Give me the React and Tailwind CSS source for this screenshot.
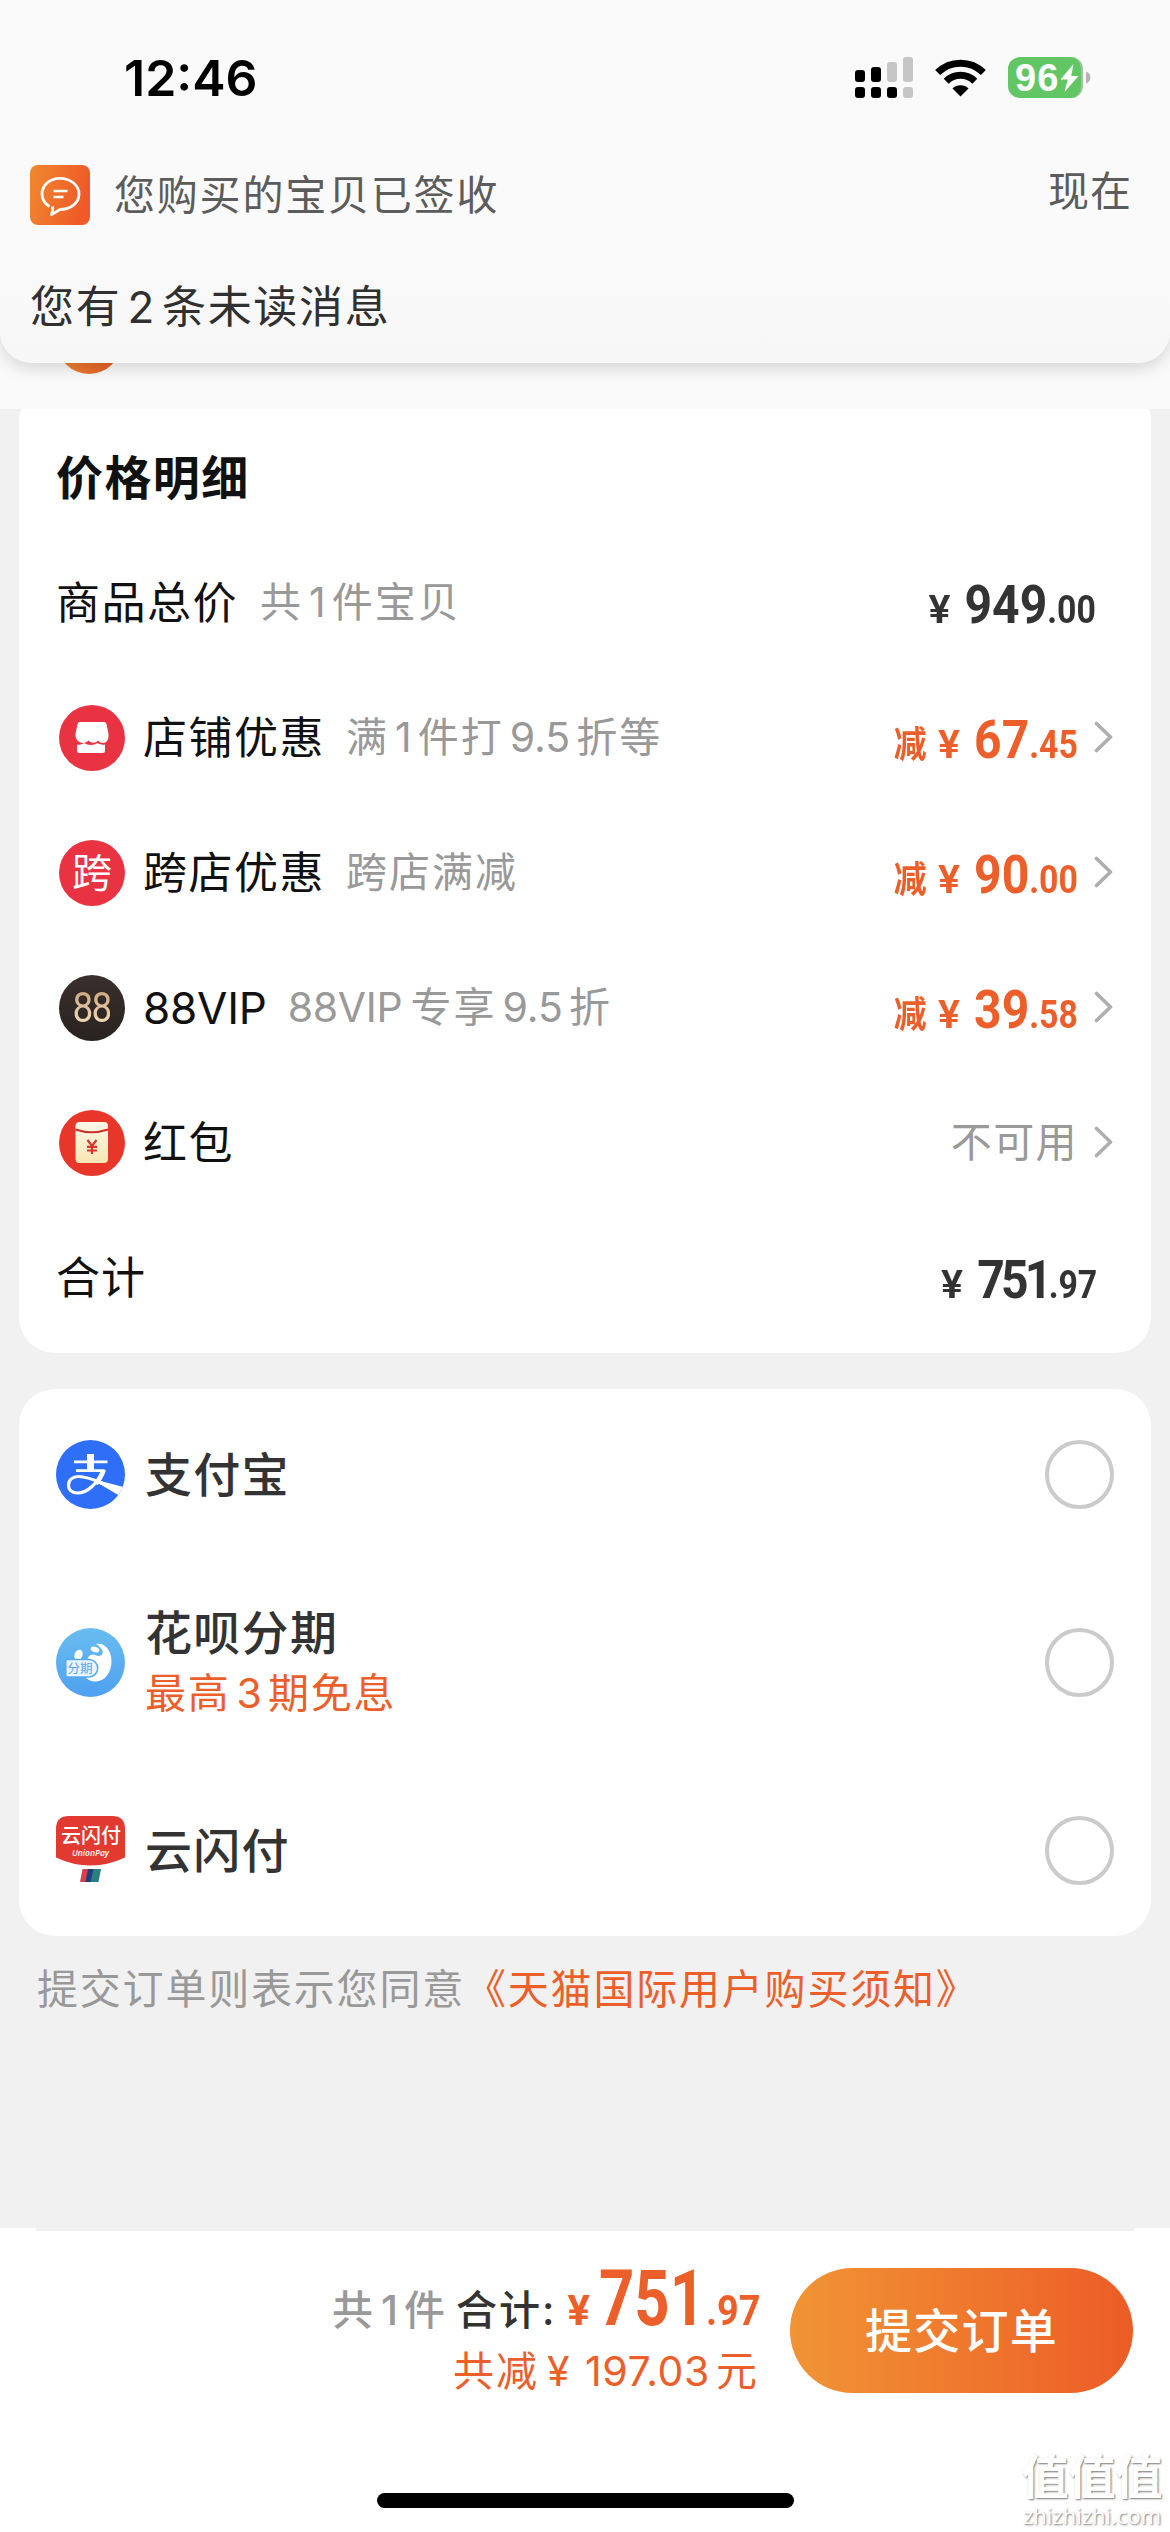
import React, { useState } from 'react';

const YEN = '\u00A5';

const priceRows = [
    { id: 'shop', label: '店铺优惠', note: ['满', '1', '件打', '9.5', '折等'], cut: ['67', '.45'] },
    { id: 'cross', label: '跨店优惠', note: ['跨店满减'], cut: ['90', '.00'] },
    { id: 'vip', label: '88VIP', note: ['88VIP', '专享', '9.5', '折'], cut: ['39', '.58'] },
    { id: 'packet', label: '红包', note: [], cut: null },
];

const payMethods = [
    { id: 'alipay', name: '支付宝' },
    { id: 'huabei', name: '花呗分期', promo: ['最高', '3', '期免息'] },
    { id: 'unionpay', name: '云闪付' },
];

// Latin runs get a little air on both sides, like the system font does
const Mixed = ({ parts }) =>
    parts.map((part, i) =>
        /^[\d.A-Z]+$/.test(part) ? (
            <span key={i} className={i === 0 ? 'mr-2 tracking-[-0.3px]' : 'mx-[6px] tracking-normal'}>
                {part}
            </span>
        ) : (
            <span key={i}>{part}</span>
        )
    );

const SignalIcon = () => (
    <svg width="58" height="41" viewBox="0 0 58 41">
        <g fill="#000">
            <rect x="0" y="13" width="10" height="12" rx="3" />
            <rect x="16" y="10" width="10" height="15" rx="3" />
            <rect x="0" y="30" width="10" height="11" rx="3" />
            <rect x="16" y="30" width="10" height="11" rx="3" />
            <rect x="32" y="30" width="10" height="11" rx="3" />
        </g>
        <g fill="#c6c6c6">
            <rect x="32" y="5" width="10" height="20" rx="3" />
            <rect x="48" y="0" width="10" height="25" rx="3" />
            <rect x="48" y="30" width="10" height="11" rx="3" />
        </g>
    </svg>
);

const WifiIcon = () => (
    <svg width="51" height="38" viewBox="0 0 51 38">
        <path d="M2.6 13.6a32.5 32.5 0 0 1 45.8 0" fill="none" stroke="#000" strokeWidth="7" />
        <path d="M11.2 22.2a20.3 20.3 0 0 1 28.6 0" fill="none" stroke="#000" strokeWidth="7" />
        <path d="M25.5 37.5l-8-8a11.3 11.3 0 0 1 16 0z" fill="#000" />
    </svg>
);

const Battery = () => (
    <div className="flex items-center gap-[3px]">
        <div className="flex h-[41px] w-[75px] items-center rounded-[12px] border-r-2 border-[#9cc99c] bg-[#62c664] pl-[7px]">
            <span className="w-[45px] text-[38px] leading-none font-bold tracking-[1px] text-white font-['Liberation_Sans',sans-serif]">
                96
            </span>
            <svg width="19" height="28" viewBox="0 0 19 28" className="shrink-0">
                <path d="M13.5 0L0.5 15.5h7.2L4.5 28 18.5 12h-7.3z" fill="#fff" />
            </svg>
        </div>
        <svg width="5" height="13" viewBox="0 0 5 13">
            <path d="M0 0.5a6.3 6.3 0 0 1 0 12z" fill="#b5b5b5" />
        </svg>
    </div>
);

const MessageIcon = () => (
    <svg width="60" height="60" viewBox="0 0 60 60">
        <defs>
            <linearGradient id="msg" x1="0" y1="0" x2="1" y2="0.25">
                <stop offset="0" stopColor="#f0892f" />
                <stop offset="1" stopColor="#ef5a28" />
            </linearGradient>
        </defs>
        <rect width="60" height="60" rx="8" fill="url(#msg)" />
        <path
            d="M19.5 41.5C14.5 38.5 12 34 12 29c0-9 8-15.700 18-15.700S49 20 49 29s-8.500 15.500-19 15.500c-1.500 1-5 3.500-8.500 5 1-2 1.500-5 1-8"
            fill="none"
            stroke="#fff"
            strokeWidth="2.800"
            strokeLinejoin="round"
        />
        <path d="M23.500 26h14M23.500 32h10" stroke="#fff" strokeWidth="2.500" />
    </svg>
);

const ShopIcon = () => (
    <svg width="66" height="66" viewBox="0 0 66 66" className="shrink-0">
        <circle cx="33" cy="33" r="33" fill="#ea3342" />
        <path
            d="M21 17h24q2 0 2.500 2l2 10c.5 6-2 9-5.500 9-2.500 0-4-1.500-5-2.500-2 3-7 3-9.500 0-1.500 1.500-3 2.500-5.500 2.500-4 0-8-3.500-7.500-9l2-10q.5-2 2.500-2z"
            fill="#fff"
        />
        <path d="M18 39.500c3 .6 5-.2 7-1.500 3.500 2.500 10.500 2.500 13.500 0 2 1.300 5 2.200 7.500 1.500V46q0 2-2 2H20q-2 0-2-2z" fill="#fff" />
    </svg>
);

const CrossIcon = () => (
    <div className="flex h-[66px] w-[66px] shrink-0 items-center justify-center rounded-full bg-[#ea3342] text-[40px] leading-none text-white">
        跨
    </div>
);

const VipIcon = () => (
    <div className="flex h-[66px] w-[66px] shrink-0 items-center justify-center rounded-full bg-linear-to-b from-[#3a2f2c] to-[#28231f]">
        <span className="scale-x-[.88] bg-linear-to-b from-[#c9a17a] to-[#f8e3c6] bg-clip-text text-[42px] leading-none tracking-[-2px] text-transparent font-['Roboto',sans-serif]">
            88
        </span>
    </div>
);

const PacketIcon = () => (
    <svg width="66" height="66" viewBox="0 0 66 66" className="shrink-0">
        <defs>
            <linearGradient id="packet" x1="0" y1="0" x2="0" y2="1">
                <stop offset="0" stopColor="#fdf8e8" />
                <stop offset="1" stopColor="#f8e7b4" />
            </linearGradient>
        </defs>
        <circle cx="33" cy="33" r="33" fill="#e8362b" />
        <rect x="16.500" y="12" width="32.500" height="41" rx="4" fill="url(#packet)" />
        <path d="M16.500 19.500q16 5.500 32.500 0" fill="none" stroke="#c8302c" strokeWidth="2" />
        <path d="M28.500 30l4.500 6 4.500-6M33 36v8M28 36.800h10M28 40.500h10" fill="none" stroke="#d8342c" strokeWidth="2.200" />
    </svg>
);

const AlipayIcon = () => (
    <svg width="69" height="69" viewBox="0 0 69 69" className="shrink-0">
        <defs>
            <clipPath id="alipayDisc">
                <circle cx="34.500" cy="34.500" r="34.500" />
            </clipPath>
        </defs>
        <circle cx="34.500" cy="34.500" r="34.500" fill="#2f6ef6" />
        <g clipPath="url(#alipayDisc)">
            <path d="M31 14h7v16h-7z" fill="#fff" />
            <path d="M18 20.500h33.500v2.800H18zM20 29.300h29l-1.500 2.800H20z" fill="#fff" />
            <path
                d="M46.500 30.500C42 42.500 32 53 21.500 53c-5.500 0-9-3.200-9-8 0-5 4-8.500 10-8.500 8.500 0 16 3.500 24 7"
                fill="none"
                stroke="#fff"
                strokeWidth="3.200"
            />
            <path d="M46 30l4 .5C48 36 45 41 42 45l-4-1.500C42 39 44.500 34.500 46 30z" fill="#fff" />
            <path d="M34 38.300L67.500 47l-4.500 8.500z" fill="#fff" />
        </g>
    </svg>
);

const HuabeiIcon = () => (
    <svg width="69" height="69" viewBox="0 0 69 69" className="shrink-0">
        <defs>
            <linearGradient id="huabei" x1="0" y1="0" x2="0" y2="1">
                <stop offset="0" stopColor="#69bdf0" />
                <stop offset="1" stopColor="#4fa0f0" />
            </linearGradient>
        </defs>
        <circle cx="34.500" cy="34.500" r="34.500" fill="url(#huabei)" />
        <path
            d="M40 16c9-2 15.500 7 15.500 17 0 12-7 20.500-16 20.500-5 0-8.500-2-11-5.500l3-17c1.500-5 6-5.500 9-3.500 5 2 8.500-3 4.500-7-1.500-2-3-3.500-5-4.500z"
            fill="#fff"
        />
        <ellipse cx="39" cy="21.500" rx="4.500" ry="2.700" transform="rotate(20 39 21.500)" fill="#fff" />
        <ellipse cx="22.500" cy="27" rx="4" ry="5.500" transform="rotate(20 22.500 27)" fill="#fff" />
        <path d="M11 31.500h22a8.700 8.700 0 0 1 0 17.400H11q-1.200 0-1.200-1.200v-15q0-1.200 1.200-1.200z" fill="#e9f5fe" stroke="#58aaf0" strokeWidth="1.500" />
        <text x="11.500" y="45" fontSize="12.500" fill="#58a6ee" fontFamily="Noto Sans CJK SC, sans-serif">
            分期
        </text>
    </svg>
);

const UnionPayIcon = () => (
    <svg width="69" height="69" viewBox="0 0 69 69" className="shrink-0">
        <path d="M13 0h43q13 0 13 13v28.500Q52 49.500 34.500 49.500T0 41.500V13Q0 0 13 0z" fill="#e23a30" />
        <text x="5" y="27" fontSize="20" fontWeight="500" fill="#fff" fontFamily="Noto Sans CJK SC, sans-serif">
            云闪付
        </text>
        <text x="16" y="40" fontSize="8.500" fontStyle="italic" fontWeight="600" textLength="37" fill="#fff" fontFamily="Open Sans, sans-serif">
            UnionPay
        </text>
        <path d="M26.500 53h8l-2.500 13h-8z" fill="#d8404a" />
        <path d="M32 53h7l-2.500 13h-7z" fill="#1c3f80" />
        <path d="M37.500 53H45l-2.500 13h-8z" fill="#2a7f83" />
    </svg>
);

const icons = {
    shop: ShopIcon,
    cross: CrossIcon,
    vip: VipIcon,
    packet: PacketIcon,
    alipay: AlipayIcon,
    huabei: HuabeiIcon,
    unionpay: UnionPayIcon,
};

const Chevron = () => (
    <svg width="20" height="32" viewBox="0 0 20 32" className="mb-[2px] ml-4 shrink-0">
        <path d="M2.500 2.500L16.500 16L2.500 29.500" fill="none" stroke="#aeaeae" strokeWidth="3.600" strokeLinecap="round" strokeLinejoin="round" />
    </svg>
);

const Price = ({ whole, cents, cut }) => (
    <div className="mt-[10px] flex origin-right scale-x-[.89] items-baseline leading-[60px] font-bold font-['Roboto','Noto_Sans_CJK_SC',sans-serif]">
        {cut && <span className="mr-[15px] text-[37px] leading-[60px]">减</span>}
        <span className="mr-[18px] scale-x-[1.22] text-[38px] leading-[60px] font-semibold">{YEN}</span>
        <span className={`text-[54px] leading-[60px] ${whole === '751' ? 'tracking-[-4.2px]' : ''}`}>{whole}</span>
        <span className="text-[38px] leading-[60px]">{cents}</span>
    </div>
);

const Radio = ({ checked, onClick }) => (
    <button
        onClick={onClick}
        className={`h-[69px] w-[69px] rounded-full border-4 ${checked ? 'border-[#ea5a28] bg-[#ea5a28]' : 'border-[#cbcbcb] bg-white'}`}
    />
);

const Banner = () => (
    <div className="absolute inset-x-0 top-0 h-[363px] rounded-b-[32px] bg-linear-to-b from-[#fafafa] from-60% to-[#f8f7f7] shadow-[0_6px_16px_rgba(0,0,0,0.14)]">
        <div className="flex h-[155px] items-center justify-between pr-[79px] pl-[124px]">
            <span className="text-[50px] leading-none font-semibold text-black">12:46</span>
            <div className="flex items-center gap-[22px]">
                <SignalIcon />
                <WifiIcon />
                <Battery />
            </div>
        </div>
        <div className="flex h-[80px] items-center pr-[38px] pl-[30px]">
            <MessageIcon />
            <span className="ml-[24px] text-[41px] leading-none tracking-[1.8px] text-[#5c5c5c]">您购买的宝贝已签收</span>
            <span className="relative -top-1 ml-auto text-[41px] leading-none tracking-[1px] text-[#5c5c5c]">现在</span>
        </div>
        <div className="flex h-[144px] items-center pl-[30px] text-[44px] leading-none tracking-[1.7px] text-[#303030]">
            <p>
                您有<span className="mx-[6px]">2</span>条未读消息
            </p>
        </div>
    </div>
);

const PriceCard = () => (
    <section className="-mt-[24px] h-[968px] rounded-[36px] bg-white pt-[34px]">
        <h2 className="flex h-[116px] items-center pl-[37px] text-[47px] leading-none font-bold tracking-[1.4px] text-[#111]">价格明细</h2>
        <div className="flex h-[135px] items-center pr-[55px] pl-[37px]">
            <span className="text-[44px] leading-none tracking-[1.5px] text-[#111]">商品总价</span>
            <span className="ml-[22px] text-[41px] leading-none tracking-[2px] text-[#999]">
                <Mixed parts={['共', '1', '件宝贝']} />
            </span>
            <div className="ml-auto text-[#333]">
                <Price whole="949" cents=".00" />
            </div>
        </div>
        {priceRows.map((row) => {
            const Icon = icons[row.id];
            return (
                <div key={row.id} className="flex h-[135px] items-center pr-[37px] pl-[40px]">
                    <Icon />
                    <span className={`ml-[18px] text-[44px] leading-none text-[#111] ${row.id === 'vip' ? 'tracking-[-0.2px]' : 'tracking-[1.5px]'}`}>
                        {row.label}
                    </span>
                    <span className="ml-[21px] text-[41px] leading-none tracking-[2px] text-[#999]">
                        <Mixed parts={row.note} />
                    </span>
                    <div className="ml-auto text-[#ec5f2a]">
                        {row.cut ? (
                            <Price whole={row.cut[0]} cents={row.cut[1]} cut />
                        ) : (
                            <span className="text-[41px] leading-none tracking-[1.4px] text-[#999]">不可用</span>
                        )}
                    </div>
                    <Chevron />
                </div>
            );
        })}
        <div className="flex h-[135px] items-center justify-between pr-[54px] pl-[37px] text-[#333]">
            <span className="text-[44px] leading-none tracking-[1px] text-[#111]">合计</span>
            <Price whole="751" cents=".97" />
        </div>
    </section>
);

const PayCard = () => {
    const [selected, setSelected] = useState(null);

    return (
        <section className="mt-[36px] flex h-[547px] flex-col justify-between rounded-[36px] bg-white">
            {payMethods.map((method) => {
                const Icon = icons[method.id];
                return (
                    <div key={method.id} className="flex h-[171px] items-center pr-[37px] pl-[37px]">
                        <Icon />
                        <div className="ml-[20px] flex-1">
                            <p className="text-[47px] leading-[60px] font-medium tracking-[1.3px] text-[#333]">{method.name}</p>
                            {method.promo && (
                                <p className="text-[41px] leading-[60px] tracking-[1.8px] text-[#ec5f2a]">
                                    <Mixed parts={method.promo} />
                                </p>
                            )}
                        </div>
                        <Radio checked={selected === method.id} onClick={() => setSelected(method.id)} />
                    </div>
                );
            })}
        </section>
    );
};

const Footer = () => (
    <footer className="mt-auto h-[304px] bg-white">
        <div className="mx-[36px] h-[3px] bg-[#f1f1f1]" />
        <div className="flex h-[198px] items-center justify-end pr-[37px]">
            <div className="mr-[31px] flex flex-col items-end">
                <div className="flex items-baseline text-[41px] leading-[70px]">
                    <span className="font-medium tracking-[2px] text-[#999]">
                        <Mixed parts={['共', '1', '件']} />
                    </span>
                    <span className="mr-[11px] ml-[9px] font-medium tracking-[2px] text-[#333]">合计:</span>
                    <span className="flex items-baseline font-bold text-[#ec5f2a] font-['Roboto',sans-serif]">
                        <span className="mr-[9px] text-[42px] leading-[70px]">{YEN}</span>
                        <span className="w-[107px] origin-left scale-x-[.8] text-[77px] leading-[70px]">751</span>
                        <span className="w-[53px] origin-left scale-x-[.9] text-[42px] leading-[70px]">.97</span>
                    </span>
                </div>
                <p className="text-[41px] leading-[50px] tracking-[2px] text-[#ec5f2a]">
                    共减<span className="mr-[15px] ml-[8px] tracking-[0.4px]">{YEN}</span>
                    <span className="mr-[6px] tracking-[0.6px]">197.03</span>元
                </p>
            </div>
            <button className="h-[125px] w-[343px] rounded-full bg-linear-to-r from-[#f09435] to-[#ec5b26] text-[47px] leading-none font-medium tracking-[1.3px] text-white">
                提交订单
            </button>
        </div>
        <div className="mx-auto mt-[64px] h-[15px] w-[417px] rounded-full bg-black" />
    </footer>
);

const Watermark = () => (
    <div className="absolute right-[6px] bottom-[6px] flex w-[144px] flex-col items-center text-white [text-shadow:1px_1px_2px_#777] font-['Roboto','Noto_Sans_CJK_SC',sans-serif]">
        <span className="text-[47px] leading-[52px] font-bold">值值值</span>
        <span className="text-[22px] leading-[22px] font-['Open_Sans',sans-serif]">zhizhizhi.com</span>
    </div>
);

export default function App() {
    return (
        <div className="relative flex h-[2532px] w-[1170px] flex-col overflow-hidden bg-[#f1f1f1] font-['Inter','Noto_Sans_CJK_SC',sans-serif]">
            {/* Page header, mostly hidden by the banner */}
            <header className="h-[409px] shrink-0 bg-[#fafafa] pt-[310px] pl-[57px]">
                <div className="h-[64px] w-[64px] rounded-full bg-linear-to-r from-[#f0892f] to-[#e2552a]" />
            </header>
            <main className="overflow-hidden px-[19px]">
                <PriceCard />
                <PayCard />
                <p className="mt-[23px] pl-[18px] text-[41px] leading-[60px] tracking-[1.8px] text-[#999]">
                    提交订单则表示您同意<a className="text-[#ec5f2a]">《天猫国际用户购买须知》</a>
                </p>
            </main>
            <Footer />
            <Banner />
            <Watermark />
        </div>
    );
}
